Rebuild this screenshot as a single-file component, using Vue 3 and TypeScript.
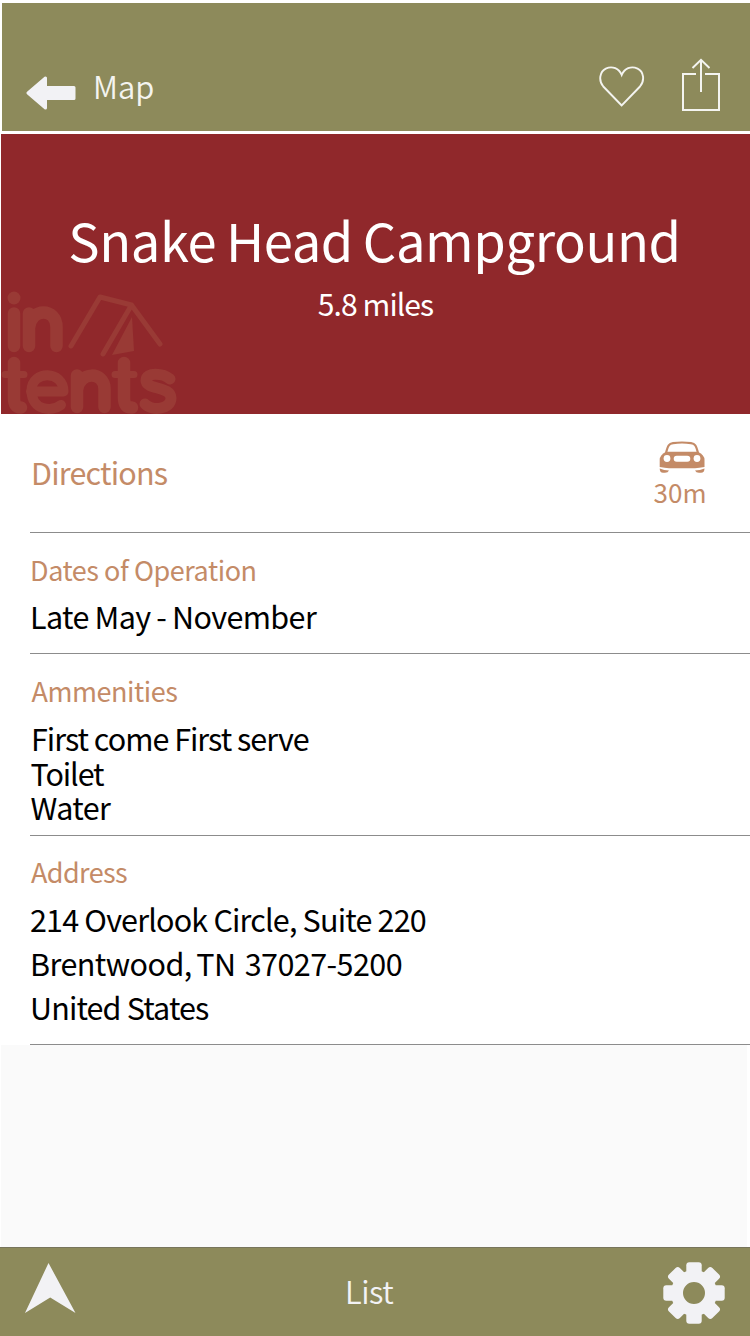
<script setup lang="ts">
interface Section {
  id: string
  label: string
  lines: string[]
}

const sections: Section[] = [
  { id: 'dates', label: 'Dates of Operation', lines: ['Late May - November'] },
  { id: 'amenities', label: 'Ammenities', lines: ['First come First serve', 'Toilet', 'Water'] },
  { id: 'address', label: 'Address', lines: ['214 Overlook Circle, Suite 220', 'Brentwood, TN  37027-5200', 'United States'] },
]

const teeth: number[] = [0, 45, 90, 135, 180, 225, 270, 315]
</script>

<template>
  <div class="screen">
    <header class="topbar">
      <svg class="back" width="50" height="34" viewBox="0 0 50 34">
        <path d="M2 17 19.5 2V11.5H48V22.5H19.5V32Z" fill="#f2f2f5" stroke="#f2f2f5" stroke-width="3" stroke-linejoin="round" />
      </svg>
      <span class="map">Map</span>
      <svg class="heart" width="46" height="42" viewBox="0 0 46 42">
        <path d="M22.7 39.5 4.300 20.500C-.8 14.500.8 5.500 6.800 2.600 13.500-.4 20 2.500 22.700 9 25.400 2.500 32-.4 38.600 2.600 44.800 5.500 46 14.500 41 20.500Z" fill="none" stroke="#f4f4f0" stroke-width="1.9" />
      </svg>
      <svg class="share" width="40" height="54" viewBox="0 0 40 54">
        <path d="M15 16H2V52H38V16H24M20 34V2M11.500 10 20 1.800 28.500 10" fill="none" stroke="#f4f4f0" stroke-width="2" />
      </svg>
    </header>

    <section class="hero">
      <h1>Snake Head Campground</h1>
      <p>5.8 miles</p>
      <svg class="logo" width="180" height="126" viewBox="0 288 180 126">
        <g fill="none" stroke="#993a35" stroke-linecap="round" stroke-linejoin="round">
          <g stroke-width="12.500">
            <path d="M14 313.500V346M29 313.500V346M29 328C31 307 56.500 308 56.500 327V346" />
            <path d="M14 363V398Q14 408 21 407.500M77 375.500V407M77 390C79 371 104.500 371 104.500 389V407M124 363V398Q124 408 132 407.500" />
          </g>
          <path d="M170 379C163 373 146 372 146 380.500C146 390 171 386 171 398C171 410 151 411 145 404" stroke-width="11" />
          <path d="M31 391.500H63.500C63.500 370 31.500 370 31.500 390.500C31.500 411 52 412 61 405" stroke-width="10" />
          <path d="M5 374.500H24M115 374.500H134" stroke-width="7" />
          <path d="M71 346 100 297 131.500 305 160 344M131.500 305 103 354" stroke-width="5" />
        </g>
        <circle cx="14" cy="298" r="6.500" fill="#993a35" />
        <path d="M132 317 134 351 112 355Z" fill="#993a35" />
      </svg>
    </section>

    <main>
      <section class="row directions">
        <span class="dir">Directions</span>
        <div class="drive">
          <svg width="46" height="32" viewBox="0 0 46 32">
            <path d="M7 12C9 4 10 2.800 14 2.200Q23 .8 32 2.200C36 2.800 37 4 39 12" fill="none" stroke="#c48b67" stroke-width="2.200" />
            <path d="M7 10.800H39Q45.500 14 45.500 19V26Q40 27 36 27.300H10Q6 27 .7 26V19Q.7 14 7 10.800Z" fill="#c48b67" />
            <circle cx="8" cy="17.500" r="3.400" fill="#fff" />
            <circle cx="38" cy="17.500" r="3.400" fill="#fff" />
            <rect x="14.700" y="14.800" width="16.600" height="6" rx="3" fill="#fff" />
            <path d="M.7 27.500Q5 29.500 10 29.500Q9 31.700 6 31.700H4Q.7 31.700 .7 27.500ZM45.500 27.500Q41 29.500 36 29.500Q37 31.700 40 31.700H42Q45.500 31.700 45.500 27.500Z" fill="#c48b67" />
          </svg>
          <span class="time">30m</span>
        </div>
      </section>
      <section v-for="s in sections" :key="s.id" class="row" :class="s.id">
        <h2>{{ s.label }}</h2>
        <p v-for="(line, i) in s.lines" :key="line" :class="'l' + i">{{ line }}</p>
      </section>
    </main>

    <div class="filler"></div>

    <footer>
      <svg class="nav" width="52" height="50" viewBox="0 0 52 50">
        <path d="M23.500 0 50.500 50 25.200 34.500 0 50Z" fill="#f2f2f5" />
      </svg>
      <span class="list">List</span>
      <svg class="gear" width="62" height="62" viewBox="-31 -31 62 62">
        <g fill="#f2f2f5">
          <rect v-for="a in teeth" :key="a" x="-7.700" y="-30.700" width="15.400" height="18" rx="3" :transform="`rotate(${a})`" />
        </g>
        <circle r="17" fill="none" stroke="#f2f2f5" stroke-width="12" />
      </svg>
    </footer>
  </div>
</template>

<style>
body { margin: 0; background: #fff; }
</style>

<style scoped>
.screen { width: 750px; height: 1336px; display: flex; flex-direction: column; overflow: hidden; background: #fff; font-family: "Noto Sans CJK SC", "Noto Sans", sans-serif; color: #000; }
h1, h2, p { margin: 0; font-weight: 400; white-space: pre; }
svg { display: block; flex: none; }
.topbar { box-sizing: border-box; height: 128px; margin: 3px 0 0 2px; background: #8d8a5b; display: flex; align-items: flex-start; padding-left: 24px; color: #f4f4f0; }
.back { margin-top: 73px; }
.map { font-size: 31px; line-height: 40px; margin: 63px 0 0 17px; width: 60px; white-space: nowrap; font-weight: 350; }
.heart { margin: 63px 0 0 446px; }
.share { margin: 55px 0 0 36px; }
.hero { position: relative; flex: none; height: 280px; margin: 3px 0 0 1px; background: #90282b; color: #fff; text-align: center; overflow: hidden; }
.hero h1 { font-size: 52.5px; line-height: 70px; margin: 70px 2px 0 0; letter-spacing: -0.4px; word-spacing: -1.5px; }
.hero p { font-size: 30px; line-height: 40px; margin-top: 9px; letter-spacing: -0.9px; }
.logo { position: absolute; left: -1px; bottom: 0; }
.row { box-sizing: border-box; margin-left: 30px; border-bottom: 1px solid #8c8c8c; color: #000; }
.directions { height: 119px; display: flex; justify-content: space-between; color: #c48b67; }
.dir { font-size: 30.5px; line-height: 40px; margin: 38px 0 0 1px; letter-spacing: -0.8px; }
.drive { width: 54px; margin: 27px 43px 0 0; display: flex; flex-direction: column; align-items: center; }
.drive svg { margin-left: 4px; }
.time { font-size: 26px; line-height: 36px; margin-top: 1px; }
h2 { font-size: 27px; line-height: 36px; color: #c48b67; letter-spacing: -0.45px; }
.row p { font-size: 30.5px; line-height: 34.5px; letter-spacing: -0.6px; }
.dates { height: 121px; padding-top: 19px; }
.dates p { margin-top: 11px; word-spacing: -0.5px; }
.amenities { height: 182px; padding-top: 19px; }
.amenities h2 { margin-left: 1.5px; }
.amenities p { margin-left: 0.5px; }
.amenities .l0 { margin: 12px 0 0 1px; letter-spacing: -1px; }
.amenities .l1 { letter-spacing: -1.1px; }
.address { height: 209px; padding-top: 18px; }
.address h2 { margin-left: 1px; letter-spacing: -0.6px; }
.address p { line-height: 44px; letter-spacing: -0.86px; }
.address .l0 { margin-top: 7px; letter-spacing: -0.82px; }
.address .l1 { letter-spacing: -0.55px; word-spacing: -1.7px; }
.filler { height: 202px; margin: 0 3px 0 1px; background: #fafafa; }
footer { box-sizing: border-box; height: 89px; border-top: 1px solid #77755c; background: #8d8a5b; display: flex; align-items: flex-start; padding-left: 25px; color: #f2f2f5; }
.nav { margin-top: 15px; }
.list { font-size: 31px; line-height: 40px; font-weight: 350; margin: 23px 0 0 268px; width: 52px; letter-spacing: -0.5px; }
.gear { margin: 14px 0 0 266px; }
</style>
